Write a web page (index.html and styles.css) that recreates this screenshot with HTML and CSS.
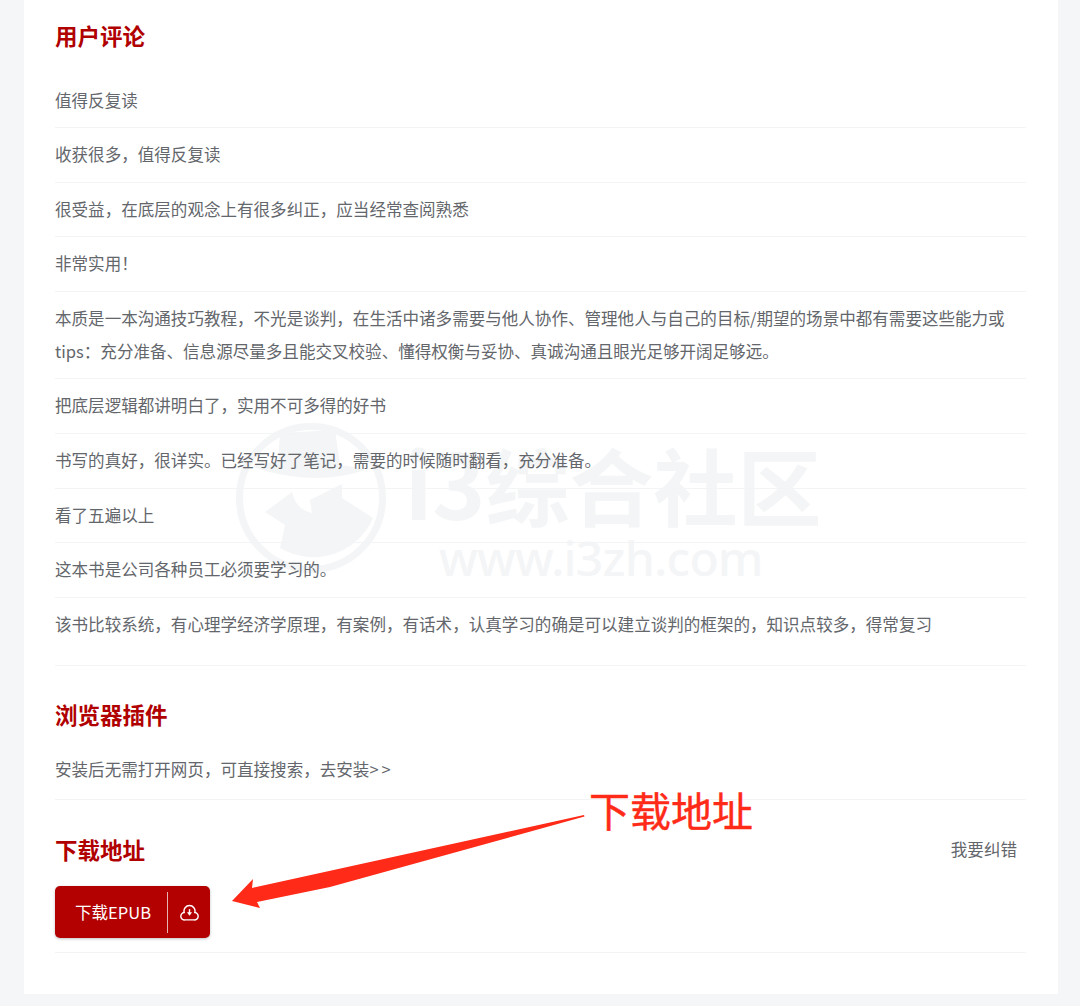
FILE: index.html
```html
<!DOCTYPE html>
<html lang="zh-CN">
<head>
    <meta charset="UTF-8">
    <meta name="viewport" content="width=device-width, initial-scale=1.0">
    <title>下载地址</title>
    <link rel="stylesheet" href="styles.css">
</head>
<body>
    <div class="card">
        <div class="watermark">
            <svg class="wm-logo" viewBox="0 0 180 180">
                <circle cx="81" cy="88" r="71.500" fill="none" stroke="#f4f5f6" stroke-width="7"/>
                <path d="M50 23 L105 20 L110 55 Q128 57 135 60 Q100 72 60 66 Q35 62 22 56 Q32 53 48 52 Z" fill="#f4f5f6"/>
                <path d="M35 102 L62 82 Q66 100 82 103 L80 90 L112 74 L112 88 L143 108 A65 65 0 0 1 50 138 L55 115 Z" fill="#f4f5f6"/>
            </svg>
            <div class="wm-text">
                <div class="wm-name"><span class="wm-i3">i3</span>综合社区</div>
                <div class="wm-url">www.i3zh.com</div>
            </div>
        </div>

        <h2 class="titulo">用户评论</h2>
        <ul class="lista">
            <li>值得反复读</li>
            <li>收获很多，值得反复读</li>
            <li>很受益，在底层的观念上有很多纠正，应当经常查阅熟悉</li>
            <li>非常实用！</li>
            <li>本质是一本沟通技巧教程，不光是谈判，在生活中诸多需要与他人协作、管理他人与自己的目标/期望的场景中都有需要这些能力或tips：充分准备、信息源尽量多且能交叉校验、懂得权衡与妥协、真诚沟通且眼光足够开阔足够远。</li>
            <li>把底层逻辑都讲明白了，实用不可多得的好书</li>
            <li>书写的真好，很详实。已经写好了笔记，需要的时候随时翻看，充分准备。</li>
            <li>看了五遍以上</li>
            <li>这本书是公司各种员工必须要学习的。</li>
            <li class="ultimo">该书比较系统，有心理学经济学原理，有案例，有话术，认真学习的确是可以建立谈判的框架的，知识点较多，得常复习</li>
        </ul>

        <h2 class="titulo plugin">浏览器插件</h2>
        <p class="fila">安装后无需打开网页，可直接搜索，去安装<span class="mas">&gt;&gt;</span></p>

        <div class="cabecera">
            <h2 class="titulo">下载地址</h2>
            <span class="corregir">我要纠错</span>
        </div>
        <div class="descarga">
            <a class="boton">
                <span class="boton-texto">下载EPUB</span>
                <span class="boton-icono">
                    <svg width="19" height="19" viewBox="0 0 20 20" fill="none" stroke="#fff" stroke-width="1.500">
                        <path d="M5.200 17.800 H14.800 A3.900 3.900 0 0 0 15.600 10 A5.800 5.800 0 1 0 4.400 10 A3.900 3.900 0 0 0 5.200 17.800 Z"/>
                        <path d="M10 6.500 V10.500"/>
                        <path d="M7.300 9.800 H12.700 L10 13.300 Z" fill="#fff" stroke="none"/>
                    </svg>
                </span>
            </a>
        </div>

        <svg class="flecha" width="365" height="100" viewBox="0 0 365 100">
            <path d="M360 1 L360.500 2.500 L106 73 L33 88 L36 94 L8 87 L29 65 L28 74 Z" fill="#ff2a17"/>
        </svg>
        <span class="nota">下载地址</span>
    </div>
</body>
</html>
```

FILE: styles.css
```css
html, body {
    margin: 0;
    height: 100%;
}

body {
    background: #f5f6f8;
    font-family: "Noto Sans CJK SC", "Liberation Sans", sans-serif;
    font-size: 16.56px;
    color: #63666b;
    overflow: hidden;
}

.card {
    position: relative;
    box-sizing: border-box;
    width: 1034px;
    height: 994px;
    margin-left: 24px;
    padding: 23px 32px 0 31px;
    background: #fff;
}

.titulo {
    position: relative;
    margin: 0;
    font-family: "Liberation Serif", "Noto Sans CJK SC", serif;
    font-size: 22.500px;
    line-height: 30px;
    font-weight: bold;
    color: #b00000;
}

.plugin {
    margin-top: 36px;
}

.lista {
    position: relative;
    margin: 20.500px 0 0;
    padding: 0;
    list-style: none;
}

.lista li, .fila {
    padding: 10px 0 10.600px;
    line-height: 33px;
    border-bottom: 1px solid #f3f4f5;
}

.lista li.ultimo {
    padding-bottom: 24.500px;
}

.fila {
    position: relative;
    margin: 10.500px 0 0;
    padding-bottom: 13.500px;
}

.mas {
    letter-spacing: 3px;
}

.cabecera {
    position: relative;
    display: flex;
    justify-content: space-between;
    align-items: center;
    margin-top: 37px;
    padding-right: 9px;
}

.corregir {
    line-height: 24px;
    padding-bottom: 6px;
}

.descarga {
    position: relative;
    margin-top: 19px;
    padding-bottom: 14px;
    border-bottom: 1px solid #f3f4f5;
}

.boton {
    display: inline-flex;
    align-items: center;
    height: 52px;
    width: 155px;
    box-sizing: border-box;
    padding-left: 20px;
    background: #b30000;
    border-radius: 5px;
    box-shadow: 0 1px 3px rgba(0, 0, 0, 0.25);
    color: #fff;
    vertical-align: top;
}

.boton-texto {
    width: 92px;
    white-space: nowrap;
}

.boton-icono {
    display: flex;
    align-items: center;
    justify-content: center;
    flex: 1;
    height: 41px;
    border-left: 1px solid #e6b3b3;
}

/* marca de agua y anotaciones encima de la pagina */
.watermark {
    position: absolute;
    left: 206px;
    top: 410px;
    display: flex;
    color: #f4f5f6;
}

.wm-logo {
    width: 180px;
    height: 180px;
}

.wm-name {
    margin-top: 32px;
    margin-left: -5px;
    font-size: 84px;
    line-height: 84px;
    font-weight: 700;
    white-space: nowrap;
}

.wm-i3 {
    font-size: 90px;
    line-height: 0;
}

.wm-url {
    margin-left: 29px;
    margin-top: 6px;
    font-family: "Noto Sans", sans-serif;
    font-size: 48px;
    line-height: 52px;
    font-weight: 500;
    letter-spacing: -0.7px;
    white-space: nowrap;
}

.flecha {
    position: absolute;
    left: 200px;
    top: 814px;
}

.nota {
    position: absolute;
    left: 565px;
    top: 782px;
    font-size: 41px;
    line-height: 54px;
    -webkit-text-stroke: 0.4px #ff2a17;
    color: #ff2a17;
    white-space: nowrap;
}
```
